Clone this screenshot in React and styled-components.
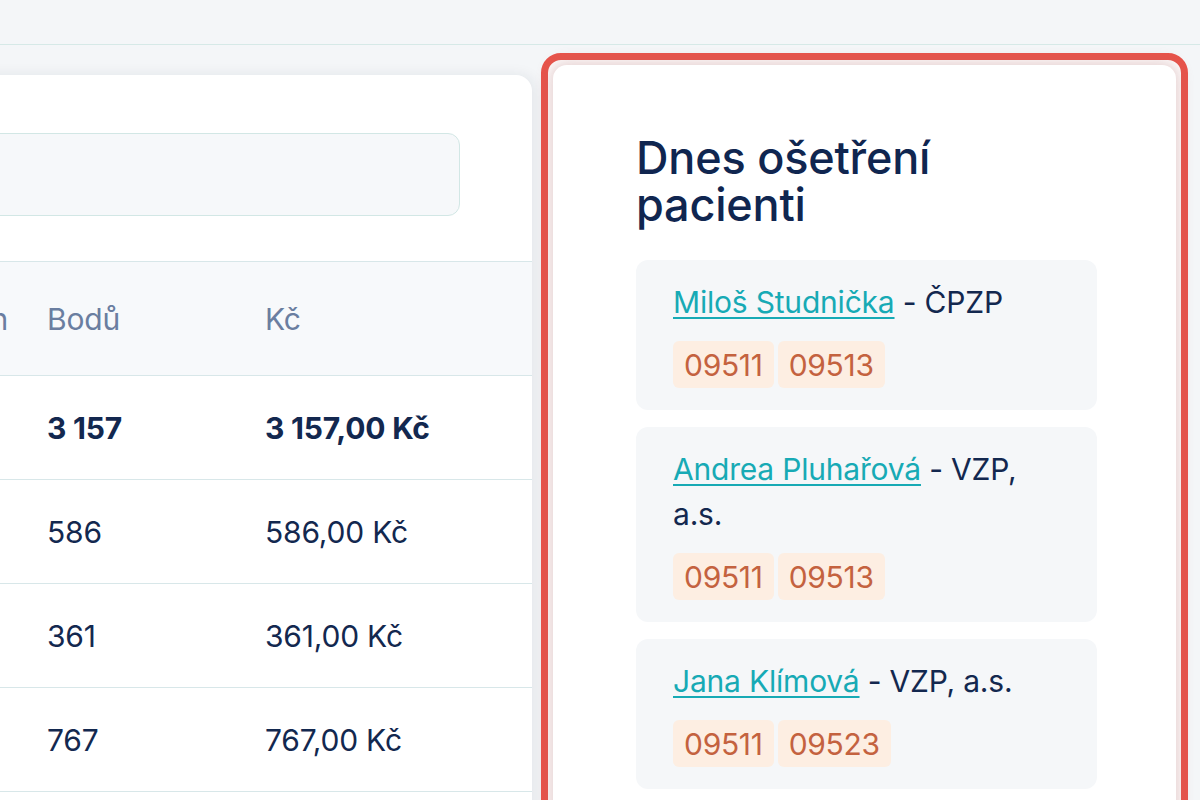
import React from "react";
import styled, { createGlobalStyle } from "styled-components";

const GlobalStyle = createGlobalStyle`
  html, body {
    margin: 0;
    padding: 0;
  }
  body {
    background: #f4f6f8;
    font-family: Inter, "Noto Sans", sans-serif;
    color: #13284f;
  }
`;

const Page = styled.div`
  width: 1200px;
  height: 800px;
  overflow: hidden;
  background: #f4f6f8;
`;

const TopBar = styled.div`
  height: 44px;
  border-bottom: 1px solid #d6e9e7;
`;

const Main = styled.div`
  display: flex;
  align-items: flex-start;
  gap: 9px;
`;

const ListCard = styled.section`
  flex-shrink: 0;
  width: 832px;
  height: 760px;
  margin-left: -300px;
  margin-top: 30px;
  padding-top: 58px;
  box-sizing: border-box;
  background: #fff;
  border-radius: 16px;
  box-shadow: 3px 0 14px rgba(20, 40, 70, 0.08);
`;

const SearchBox = styled.div`
  height: 83px;
  margin: 0 72px 0 24px;
  box-sizing: border-box;
  background: #f6f8fa;
  border: 1.5px solid #d2e7e5;
  border-radius: 12px;
`;

const Table = styled.div`
  margin-top: 45px;
`;

const Row = styled.div`
  display: grid;
  grid-template-columns: 347px 218px 1fr;
  align-items: center;
  height: ${(p) => (p.head ? "115px" : "104px")};
  box-sizing: border-box;
  background: ${(p) => (p.head ? "#f7f9fb" : "#fff")};
  border-top: ${(p) => (p.head ? "1.5px solid #d8e7e9" : "none")};
  border-bottom: 1.5px solid #d8e7e9;
  font-size: 30px;
  font-weight: ${(p) => (p.bold ? 700 : 400)};
  color: ${(p) => (p.head ? "#6a7ea0" : "#13284f")};
`;

const Cell = styled.div`
  text-align: ${(p) => (p.right ? "right" : "left")};
  padding-right: ${(p) => (p.right ? "39px" : "0")};
  white-space: nowrap;
  letter-spacing: -0.2px;
`;

const Highlight = styled.div`
  flex-shrink: 0;
  width: 647px;
  height: 800px;
  margin-top: 8px;
  box-sizing: border-box;
  padding: 5px;
  border: 7px solid #e8534a;
  border-radius: 20px;
  background: #fff;
`;

const PatientsCard = styled.div`
  height: 100%;
  box-sizing: border-box;
  padding: 69px 79px 0 83px;
  background: #fff;
  border-radius: 14px;
  box-shadow: 0 0 14px 4px rgba(175, 105, 105, 0.3);
`;

const Title = styled.h2`
  margin: 0;
  font-size: 45px;
  line-height: 47px;
  font-weight: 500;
  letter-spacing: -0.2px;
  color: #102650;
`;

const PatientList = styled.div`
  display: flex;
  flex-direction: column;
  gap: 17px;
  margin-top: 32px;
`;

const Patient = styled.div`
  padding: 20px 37px 22px;
  background: #f5f7f9;
  border-radius: 12px;
`;

const NameLine = styled.div`
  font-size: 30px;
  line-height: 45px;
  letter-spacing: -0.2px;
  color: #13284f;
`;

const NameLink = styled.a`
  color: #17aab5;
  text-decoration: underline;
  text-decoration-thickness: 2px;
  text-underline-offset: 4px;
`;

const Codes = styled.div`
  display: flex;
  gap: 4px;
  margin-top: 16px;
`;

const Code = styled.span`
  display: flex;
  align-items: center;
  height: 47px;
  padding: 0 11px;
  background: #fdeee2;
  border-radius: 6px;
  font-size: 30px;
  letter-spacing: -0.3px;
  color: #c4623f;
`;

const rows = [
  { points: "3 157", price: "3 157,00 Kč", bold: true },
  { points: "586", price: "586,00 Kč" },
  { points: "361", price: "361,00 Kč" },
  { points: "767", price: "767,00 Kč" },
];

const patients = [
  { name: "Miloš Studnička", insurer: "ČPZP", codes: ["09511", "09513"] },
  { name: "Andrea Pluhařová", insurer: "VZP, a.s.", codes: ["09511", "09513"] },
  { name: "Jana Klímová", insurer: "VZP, a.s.", codes: ["09511", "09523"] },
];

export default function App() {
  return (
    <Page>
      <GlobalStyle />
      <TopBar />
      <Main>
        <ListCard>
          <SearchBox />
          <Table>
            <Row head>
              <Cell right>Den</Cell>
              <Cell>Bodů</Cell>
              <Cell>Kč</Cell>
            </Row>
            {rows.map((r) => (
              <Row key={r.points} bold={r.bold}>
                <Cell />
                <Cell>{r.points}</Cell>
                <Cell>{r.price}</Cell>
              </Row>
            ))}
          </Table>
        </ListCard>

        <Highlight>
          <PatientsCard>
            <Title>
              Dnes ošetření
              <br />
              pacienti
            </Title>
            <PatientList>
              {patients.map((p) => (
                <Patient key={p.name}>
                  <NameLine>
                    <NameLink href="#">{p.name}</NameLink> - {p.insurer}
                  </NameLine>
                  <Codes>
                    {p.codes.map((c) => (
                      <Code key={c}>{c}</Code>
                    ))}
                  </Codes>
                </Patient>
              ))}
            </PatientList>
          </PatientsCard>
        </Highlight>
      </Main>
    </Page>
  );
}
